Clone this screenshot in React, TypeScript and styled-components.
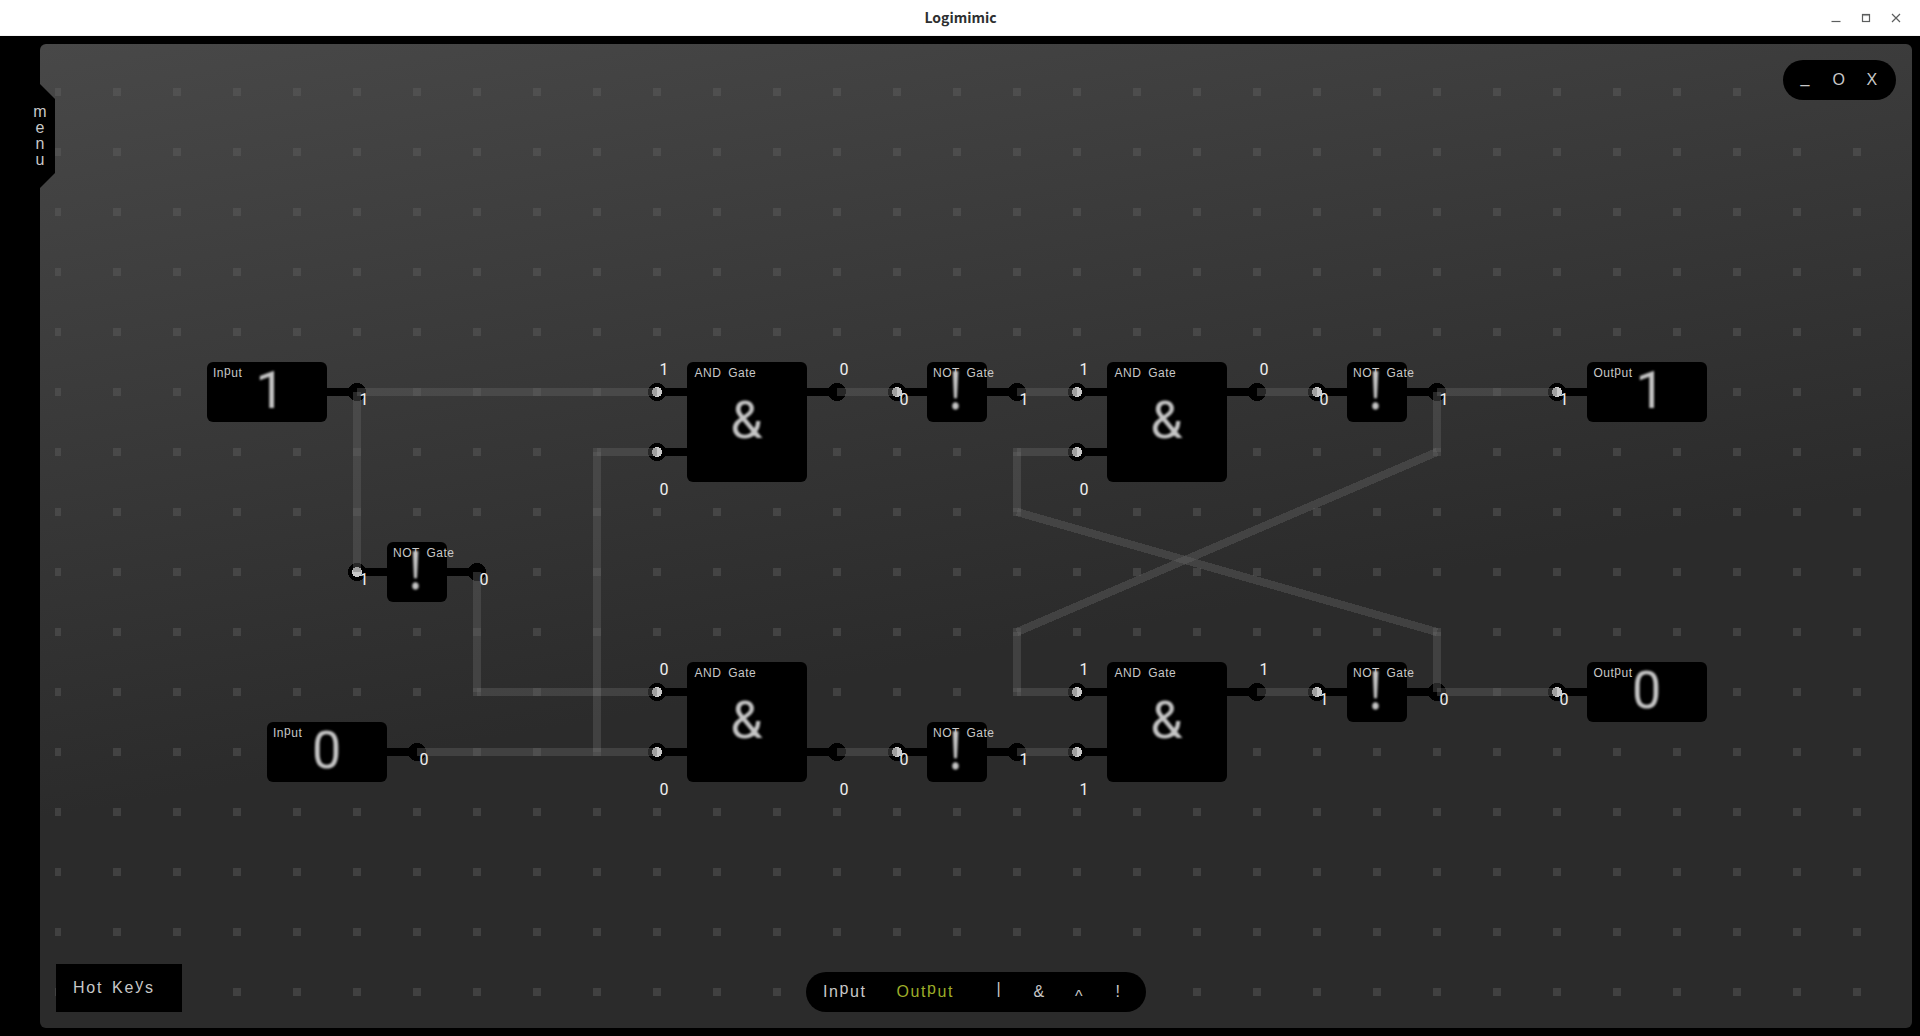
import React from "react";
import styled, { createGlobalStyle } from "styled-components";

const GlobalStyle = createGlobalStyle`
  body {
    margin: 0;
    background: #000;
    overflow: hidden;
  }
  * {
    box-sizing: border-box;
  }
`;

const BOARD_LEFT = 40;
const BOARD_TOP = 44;
const INK = "#c8c8c8";

const Window = styled.div`
  display: flex;
  flex-direction: column;
  width: 1920px;
  height: 1036px;
  background: #000;
  color: ${INK};
  font-family: "Liberation Sans", Arial, sans-serif;
  font-size: 16px;
  line-height: 16px;
`;

const TitleBar = styled.header`
  display: grid;
  grid-template-columns: 1fr auto 1fr;
  align-items: center;
  height: 36px;
  flex: none;
  padding: 0 19px 0 20px;
  background: #fff;
  border-bottom: 1px solid #f4f4f4;
`;

const Title = styled.h1`
  grid-column: 2;
  margin: 0;
  padding-bottom: 2px;
  font-family: "Noto Sans CJK SC", "Noto Sans", sans-serif;
  font-size: 14px;
  font-weight: 700;
  line-height: 34px;
  color: #2d2f30;
`;

const TitleButtons = styled.div`
  display: flex;
  justify-content: flex-end;
  gap: 20px;
`;

const TitleIcon = styled.svg`
  display: block;
  width: 10px;
  height: 10px;
  fill: none;
  stroke: #5c5e5e;
  stroke-width: 1.2;
`;

const Body = styled.main`
  flex: 1;
  display: flex;
  padding: 8px 8px 8px 40px;
`;

const Board = styled.section`
  position: relative;
  flex: 1;
  display: flex;
  flex-direction: column;
  justify-content: space-between;
  padding: 16px;
  border-radius: 6px;
  background: linear-gradient(170deg, #484848 0%, #2b2b2b 59%);
`;

const Layer = styled.svg`
  position: absolute;
  inset: 0;
  width: 100%;
  height: 100%;
  shape-rendering: crispEdges;
`;

const MenuTab = styled.button`
  position: absolute;
  left: -10px;
  top: 40px;
  width: 25px;
  height: 104px;
  padding: 20px 5px 0 0;
  display: flex;
  flex-direction: column;
  align-items: center;
  border: 0;
  background: #000;
  clip-path: polygon(0 0, 10px 0, 25px 15px, 25px 89px, 10px 104px, 0 104px);
  color: ${INK};
  font: 16px/16px "Liberation Sans", Arial, sans-serif;
`;

const TopRow = styled.div`
  display: flex;
  justify-content: flex-end;
`;

const WindowPill = styled.div`
  position: relative;
  display: grid;
  grid-template-columns: 32px 34px 1fr;
  align-items: center;
  width: 113px;
  height: 40px;
  padding: 0 0 0 17.5px;
  border-radius: 20px;
  background: #000;
`;

const PillLetter = styled.span<{ $lift?: number }>`
  padding-bottom: ${(p) => p.$lift ?? 0}px;
`;

const BottomRow = styled.div`
  display: grid;
  grid-template-columns: 750px 340px 1fr;
  align-items: end;
`;

const HotKeys = styled.button`
  position: relative;
  display: flex;
  align-items: center;
  width: 126px;
  height: 48px;
  padding: 0 0 0 17px;
  border: 0;
  background: #000;
  color: ${INK};
  font: 16px/16px "Liberation Sans", Arial, sans-serif;
  letter-spacing: 1.8px;
  word-spacing: 2.5px;
`;

const Toolbar = styled.nav`
  position: relative;
  display: grid;
  grid-template-columns: 73.5px 100px 37px 41.5px 40.5px 1fr;
  align-items: center;
  height: 40px;
  padding: 0 0 0 17px;
  border-radius: 20px;
  background: #000;
`;

const Tool = styled.span<{ $active?: boolean }>`
  color: ${(p) => (p.$active ? "#9dad28" : INK)};
  letter-spacing: 1.6px;
  white-space: nowrap;
`;

const Shifted = styled.span<{ $by: number }>`
  display: inline-block;
  line-height: 0;
  vertical-align: ${(p) => p.$by}px;
`;

const NodeBox = styled.div<{ $x: number; $y: number; $w: number; $h: number }>`
  position: absolute;
  left: ${(p) => p.$x - BOARD_LEFT}px;
  top: ${(p) => p.$y - BOARD_TOP}px;
  width: ${(p) => p.$w}px;
  height: ${(p) => p.$h}px;
  display: grid;
  grid-template: 100% / 100%;
  border-radius: 6px;
  background: #000;
`;

const NodeLabel = styled.span<{ $indent: number }>`
  grid-area: 1 / 1;
  padding: 5px 0 0 ${(p) => p.$indent}px;
  font-size: 12px;
  line-height: 12px;
  letter-spacing: 0.5px;
  word-spacing: 3px;
  white-space: nowrap;
`;

const NodeSymbol = styled.span<{ $shift: number; $lift: number; $font: string }>`
  grid-area: 1 / 1;
  place-self: center;
  padding: 0 ${(p) => Math.max(0, -p.$shift * 2)}px ${(p) => p.$lift * 2}px
    ${(p) => Math.max(0, p.$shift * 2)}px;
  font-family: "${(p) => p.$font}", sans-serif;
  font-size: 52px;
  line-height: 52px;
  color: #c4c4c4;
  filter: blur(0.8px);
`;

const PinValue = styled.span<{ $x: number; $y: number }>`
  position: absolute;
  left: ${(p) => p.$x - BOARD_LEFT + 2.4}px;
  top: ${(p) => p.$y - BOARD_TOP}px;
  font-family: Roboto, sans-serif;
  color: #f0f0f0;
`;

type Kind = "and" | "not" | "input" | "output";
interface GateNode {
  kind: Kind;
  x: number;
  y: number;
  symbol: string;
  ins: string[];
  out?: string;
  outRow?: number;
}

const NODES: GateNode[] = [
  { kind: "input", x: 207, y: 362, symbol: "1", ins: [], out: "1" },
  { kind: "input", x: 267, y: 722, symbol: "0", ins: [], out: "0" },
  { kind: "not", x: 387, y: 542, symbol: "!", ins: ["1"], out: "0" },
  { kind: "and", x: 687, y: 362, symbol: "&", ins: ["1", "0"], out: "0", outRow: 0 },
  { kind: "and", x: 687, y: 662, symbol: "&", ins: ["0", "0"], out: "0", outRow: 1 },
  { kind: "not", x: 927, y: 362, symbol: "!", ins: ["0"], out: "1" },
  { kind: "not", x: 927, y: 722, symbol: "!", ins: ["0"], out: "1" },
  { kind: "and", x: 1107, y: 362, symbol: "&", ins: ["1", "0"], out: "0", outRow: 0 },
  { kind: "and", x: 1107, y: 662, symbol: "&", ins: ["1", "1"], out: "1", outRow: 0 },
  { kind: "not", x: 1347, y: 362, symbol: "!", ins: ["0"], out: "1" },
  { kind: "not", x: 1347, y: 662, symbol: "!", ins: ["1"], out: "0" },
  { kind: "output", x: 1587, y: 362, symbol: "1", ins: ["1"] },
  { kind: "output", x: 1587, y: 662, symbol: "0", ins: ["0"] },
];

const SIZE: Record<Kind, [number, number]> = {
  and: [120, 120],
  not: [60, 60],
  input: [120, 60],
  output: [120, 60],
};

const INDENT: Record<Kind, number> = { and: 7.5, not: 6, input: 6, output: 6.5 };

const SYMBOL: Record<string, { shift: number; lift: number; font: string }> = {
  "1": { shift: 3, lift: 1, font: "Roboto" },
  "0": { shift: -0.5, lift: 1, font: "Roboto" },
  "&": { shift: -0.5, lift: 1, font: "Roboto" },
  "!": { shift: -1.5, lift: 3, font: "Noto Sans" },
};

const WIRES: number[][] = [
  [357, 392, 657, 392],
  [357, 392, 357, 572],
  [477, 572, 477, 692, 657, 692],
  [417, 752, 657, 752],
  [597, 752, 597, 452, 657, 452],
  [837, 392, 897, 392],
  [1017, 392, 1077, 392],
  [1257, 392, 1317, 392],
  [1437, 392, 1557, 392],
  [1077, 452, 1017, 452, 1017, 512, 1437, 632, 1437, 692],
  [1437, 392, 1437, 452, 1017, 632, 1017, 692, 1077, 692],
  [837, 752, 897, 752],
  [1017, 752, 1077, 752],
  [1257, 692, 1317, 692],
  [1437, 692, 1557, 692],
];

interface Pin {
  x: number;
  y: number;
  edge: number;
  input: boolean;
  value: string;
  valueY: number;
}

const pinsOf = (n: GateNode): Pin[] => {
  const [w] = SIZE[n.kind];
  const valueOffset = (row: number) => (n.kind !== "and" ? 0 : row === 0 ? -30 : 30);
  const pins = n.ins.map((value, row) => {
    const y = n.y + 30 + row * 60;
    return { x: n.x - 30, y, edge: n.x, input: true, value, valueY: y + valueOffset(row) };
  });
  if (n.out !== undefined) {
    const row = n.outRow ?? 0;
    const y = n.y + 30 + row * 60;
    pins.push({
      x: n.x + w + 30,
      y,
      edge: n.x + w,
      input: false,
      value: n.out,
      valueY: y + valueOffset(row),
    });
  }
  return pins;
};

const PINS = NODES.flatMap(pinsOf);

const LABEL: Record<Kind, React.ReactNode> = {
  and: "AND Gate",
  not: "NOT Gate",
  input: <>In<Shifted $by={2}>p</Shifted>ut</>,
  output: <>Out<Shifted $by={2}>p</Shifted>ut</>,
};

const DotGrid = () => (
  <Layer viewBox="40 44 1872 984" fill="rgba(100,100,100,0.4)">
    {Array.from({ length: 16 }, (_, row) =>
      Array.from({ length: 31 }, (_, col) => {
        const left = Math.max(55, 53 + col * 60);
        return (
          <rect
            key={`${row}-${col}`}
            x={left}
            y={88 + row * 60}
            width={61 + col * 60 - left}
            height={8}
          />
        );
      })
    )}
  </Layer>
);

const PinLayer = () => (
  <Layer viewBox="40 44 1872 984">
    {PINS.map((p) => (
      <g key={`${p.x}-${p.y}`}>
        <rect x={Math.min(p.x, p.edge)} y={p.y - 4} width={30} height={8} fill="#000" />
        <circle cx={p.x} cy={p.y} r={9} fill="#000" />
        {p.input && <circle cx={p.x} cy={p.y} r={5} fill={INK} />}
      </g>
    ))}
  </Layer>
);

const WireLayer = () => (
  <Layer viewBox="40 44 1872 984" stroke="rgba(100,100,100,0.4)" strokeWidth={8}>
    {WIRES.flatMap((w, i) =>
      Array.from({ length: w.length / 2 - 1 }, (_, s) => (
        <line
          key={`${i}-${s}`}
          x1={w[s * 2]}
          y1={w[s * 2 + 1]}
          x2={w[s * 2 + 2]}
          y2={w[s * 2 + 3]}
        />
      ))
    )}
  </Layer>
);

export default function App() {
  return (
    <Window>
      <GlobalStyle />
      <TitleBar>
        <Title>Logimimic</Title>
        <TitleButtons>
          <TitleIcon viewBox="0 0 10 10">
            <path d="M0.5 8.5H9.5" />
          </TitleIcon>
          <TitleIcon viewBox="0 0 10 10">
            <rect x="1.5" y="1.5" width="7" height="7" />
            <path d="M1.5 2.5H8.5" strokeOpacity="0.5" />
          </TitleIcon>
          <TitleIcon viewBox="0 0 10 10">
            <path d="M1 1L9 9M9 1L1 9" />
          </TitleIcon>
        </TitleButtons>
      </TitleBar>
      <Body>
        <Board>
          <DotGrid />
          <PinLayer />
          {NODES.map((n) => {
            const [w, h] = SIZE[n.kind];
            const symbol = SYMBOL[n.symbol];
            return (
              <NodeBox key={`${n.x}-${n.y}`} $x={n.x} $y={n.y} $w={w} $h={h}>
                <NodeLabel $indent={INDENT[n.kind]}>{LABEL[n.kind]}</NodeLabel>
                <NodeSymbol $shift={symbol.shift} $lift={symbol.lift} $font={symbol.font}>
                  {n.symbol}
                </NodeSymbol>
              </NodeBox>
            );
          })}
          <WireLayer />
          {PINS.map((p) => (
            <PinValue key={`${p.x}-${p.y}`} $x={p.x} $y={p.valueY}>
              {p.value}
            </PinValue>
          ))}
          <MenuTab>
            <span>m</span>
            <span>e</span>
            <span>n</span>
            <span>u</span>
          </MenuTab>
          <TopRow>
            <WindowPill>
              <PillLetter $lift={4}>_</PillLetter>
              <PillLetter>O</PillLetter>
              <PillLetter>X</PillLetter>
            </WindowPill>
          </TopRow>
          <BottomRow>
            <HotKeys>
              <span>
                Hot Ke<Shifted $by={3}>y</Shifted>s
              </span>
            </HotKeys>
            <Toolbar>
              <Tool>
                In<Shifted $by={3}>p</Shifted>ut
              </Tool>
              <Tool $active>
                Out<Shifted $by={3}>p</Shifted>ut
              </Tool>
              <Tool>
                <Shifted $by={3}>|</Shifted>
              </Tool>
              <Tool>&amp;</Tool>
              <Tool>
                <Shifted $by={-5}>^</Shifted>
              </Tool>
              <Tool>!</Tool>
            </Toolbar>
          </BottomRow>
        </Board>
      </Body>
    </Window>
  );
}
